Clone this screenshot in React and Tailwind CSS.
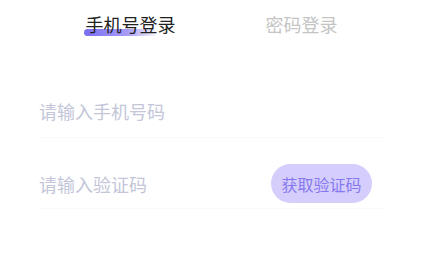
const font = { fontFamily: '"Noto Sans CJK SC", "Noto Sans", sans-serif' }

const App = () => {
    return (
        <div style={font} className="w-[422px] h-[258px] bg-white overflow-hidden">
            <div className="ml-[45px] w-[342px] grid grid-cols-2 pt-[11px]">
                <div className="flex justify-center">
                    <div className="relative">
                        <div className="absolute left-[-2px] top-[18px] h-[7px] w-[74px] rounded-full bg-gradient-to-r from-[#7a6cf0] via-[#a99ef6] via-60% to-[#ffffff00]" />
                        <p className="relative text-[18px] leading-[26px] text-[#222]">手机号登录</p>
                    </div>
                </div>
                <div className="flex justify-center">
                    <p className="text-[18px] leading-[26px] text-[#c4c4c4]">密码登录</p>
                </div>
            </div>

            <div className="ml-[39px] w-[345px] mt-[61px] flex flex-col">
                <div className="flex items-center border-b border-[#f9f9fa] pb-[13px]">
                    <span className="text-[18px] leading-[26px] text-[#c3c6d8]">请输入手机号码</span>
                </div>
                <div className="flex items-center justify-between border-b border-[#f9f9fa] pt-[26px] pb-[5px]">
                    <span className="text-[18px] leading-[26px] text-[#c3c6d8]">请输入验证码</span>
                    <button className="mr-[12px] h-[39px] w-[101px] rounded-full bg-[#d5cefc] text-[16px] text-[#8678ee]">获取验证码</button>
                </div>
            </div>
        </div>
    )
}

export default App
